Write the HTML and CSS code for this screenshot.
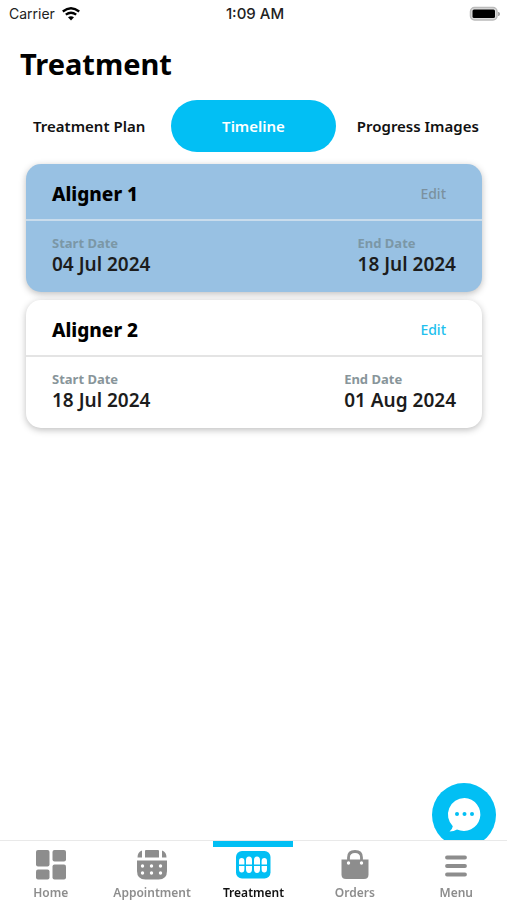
FILE: index.html
```html
<!DOCTYPE html>
<html lang="en">
<head>
<meta charset="utf-8">
<meta name="viewport" content="width=device-width, initial-scale=1">
<title>Treatment</title>
<link rel="stylesheet" href="styles.css">
</head>
<body>
<div class="app">
  <header class="status">
    <div class="carrier">
      <span>Carrier</span>
      <svg class="wifi" viewBox="0 0 18 14" aria-hidden="true">
        <path d="M.8 4.500Q9-2 17.200 4.500M3.800 7.700Q9 3.700 14.200 7.700" fill="none" stroke="#000" stroke-width="2.300"/>
        <path d="M6 10.300Q9 8 12 10.300L9 13.400Z"/>
      </svg>
    </div>
    <span class="time">1:09 AM</span>
    <svg class="battery" viewBox="0 0 32 16" aria-hidden="true">
      <rect x="1.500" y="1.500" width="26.500" height="12.500" rx="4" fill="#ddd" stroke="#bbb" stroke-width="1.500"/>
      <rect x="3.500" y="3.500" width="22.500" height="8.500" rx="1.500"/>
      <path d="M29.500 6Q32 8 29.500 10Z" fill="#aaa" stroke="#aaa"/>
    </svg>
  </header>
  <h1 class="title">Treatment</h1>
  <div class="tabs" role="tablist">
    <button class="tab" role="tab" type="button">Treatment Plan</button>
    <button class="tab tab-active" role="tab" type="button" aria-selected="true">Timeline</button>
    <button class="tab" role="tab" type="button">Progress Images</button>
  </div>
  <main class="content">
    <article class="card card-current">
      <div class="card-head">
        <h2>Aligner 1</h2>
        <button class="edit" type="button" disabled>Edit</button>
      </div>
      <dl class="dates">
        <div><dt>Start Date</dt><dd>04 Jul 2024</dd></div>
        <div><dt>End Date</dt><dd>18 Jul 2024</dd></div>
      </dl>
    </article>
    <article class="card">
      <div class="card-head">
        <h2>Aligner 2</h2>
        <button class="edit" type="button">Edit</button>
      </div>
      <dl class="dates">
        <div><dt>Start Date</dt><dd>18 Jul 2024</dd></div>
        <div><dt>End Date</dt><dd>01 Aug 2024</dd></div>
      </dl>
    </article>
  </main>
  <div class="dock">
    <button class="chat" type="button" aria-label="Chat">
      <svg viewBox="0 0 64 64" aria-hidden="true">
        <path d="M32.500 15A16.500 16.500 0 1 1 25 46.500Q22 48.500 17.500 48.500Q20.500 46 20.800 43.200A16.500 16.500 0 0 1 32.500 15Z" fill="#fff"/>
        <g fill="#02bff4"><circle cx="25" cy="31" r="2"/><circle cx="32.500" cy="31" r="2"/><circle cx="40" cy="31" r="2"/></g>
      </svg>
    </button>
    <nav class="nav">
      <a class="item" href="#home">
        <svg viewBox="0 0 36 32" aria-hidden="true">
          <rect x="3" y="1" width="13.500" height="16.500" rx="2"/><rect x="19.500" y="1" width="13.500" height="11.500" rx="2"/>
          <rect x="3" y="20.500" width="13.500" height="10" rx="2"/><rect x="19.500" y="15.500" width="13.500" height="15" rx="2"/>
        </svg>
        <span>Home</span>
      </a>
      <a class="item" href="#appointment">
        <svg viewBox="0 0 36 32" aria-hidden="true">
          <path d="M8 1.500V8.500H3.500Q3.500 3 8 1.500ZM12 1H24Q25 1 25 2V8.500H11V2Q11 1 12 1ZM28 1.500Q32.500 3 32.500 8.500H28Z"/>
          <path d="M3 11.500H33V22Q33 30.500 24.500 30.500H11.500Q3 30.500 3 22Z"/>
          <g fill="#fff"><circle cx="8.500" cy="17" r="1.700"/><circle cx="17.500" cy="17" r="1.700"/><circle cx="26.500" cy="17" r="1.700"/><circle cx="8.500" cy="24" r="1.700"/><circle cx="17.500" cy="24" r="1.700"/><circle cx="26.500" cy="24" r="1.700"/></g>
        </svg>
        <span>Appointment</span>
      </a>
      <a class="item item-active" href="#treatment" aria-current="page">
        <svg viewBox="0 0 36 32" aria-hidden="true">
          <rect x="1" y="2" width="34.500" height="27.500" rx="6"/>
          <g fill="#fff">
            <path d="M4 15.500V12Q4 9 6.700 9T9.400 12V15.500ZM11 15.500V11Q11 7.500 14 7.500T17 11V15.500ZM19 15.500V11Q19 7.500 22 7.500T25 11V15.500ZM26.600 15.500V12Q26.600 9 29.300 9T32 12V15.500Z"/>
            <path d="M4 17H9.400V20Q9.400 23.500 6.700 23.500T4 20ZM11 17H17V20Q17 24 14 24T11 20ZM19 17H25V20Q25 24 22 24T19 20ZM26.600 17H32V20Q32 23.500 29.300 23.500T26.600 20Z"/>
          </g>
        </svg>
        <span>Treatment</span>
      </a>
      <a class="item" href="#orders">
        <svg viewBox="0 0 36 32" aria-hidden="true">
          <path d="M4.500 10.500H31.500V25.500Q31.500 30 27 30H9Q4.500 30 4.500 25.500Z"/>
          <path d="M11.500 13V8.500Q11.500 2.500 18 2.500T24.500 8.500V13" fill="none" stroke="#8d8d8d" stroke-width="2.800"/>
          <g fill="#fff"><circle cx="11.500" cy="14" r="1.700"/><circle cx="24.500" cy="14" r="1.700"/></g>
        </svg>
        <span>Orders</span>
      </a>
      <a class="item" href="#menu">
        <svg viewBox="0 0 36 32" aria-hidden="true">
          <path d="M9 8.500H27M9 17H27M9 25.500H27" stroke="#8d8d8d" stroke-width="3.800" stroke-linecap="round"/>
        </svg>
        <span>Menu</span>
      </a>
    </nav>
  </div>
</div>
</body>
</html>
```
FILE: styles.css
```css
* { box-sizing: border-box; }
body {
  margin: 0;
  background: #fff;
  color: #000;
  font-family: "Noto Sans", sans-serif;
}
button { border: 0; background: none; padding: 0; font-family: inherit; }
h1, h2, dl, dd { margin: 0; }

.app { min-height: 100vh; display: flex; flex-direction: column; }

.status {
  display: grid;
  grid-template-columns: 1fr auto 1fr;
  align-items: center;
  height: 28px;
  padding: 0 6px 0 9px;
  font: 14px/28px "Inter", sans-serif;
  color: #222;
}
.carrier { display: flex; align-items: center; gap: 7px; }
.wifi { width: 18px; height: 14px; }
.time { font-size: 15px; font-weight: 500; }
.battery { width: 32px; height: 16px; justify-self: end; }

.title { padding: 16px 20px; font-size: 29px; line-height: 40px; font-weight: 700; }

.tabs { display: grid; grid-template-columns: repeat(3, 1fr); padding: 0 7px; }
.tab { height: 52px; border-radius: 26px; font-size: 15px; font-weight: 600; color: #111; white-space: nowrap; }
.tab-active { background: #02bff4; color: #fff; }

.content { flex: 1; display: flex; flex-direction: column; gap: 8px; padding: 12px 25px 12px 26px; }
.card { border-radius: 15px; background: #fff; box-shadow: 0 2px 7px rgba(0, 0, 0, .26); }
.card-current { background: #98c1e3; }
.card-head {
  display: flex;
  align-items: center;
  justify-content: space-between;
  height: 57px;
  padding: 4px 36px 0 26px;
  border-bottom: 2px solid #e4e4e4;
}
.card-current .card-head { border-color: #c9dcec; }
.card h2 { font-size: 19px; line-height: 28px; font-weight: 800; }
.edit { font-size: 14px; font-weight: 500; color: #22bfee; }
.edit:disabled { color: #7b919f; }
.dates { display: flex; justify-content: space-between; padding: 12px 26px 17px; }
dt { font-size: 13px; line-height: 20px; font-weight: 700; color: #88959a; }
.card-current dt { color: #7b97a6; }
dd { font-size: 19px; line-height: 22px; font-weight: 600; color: #1c1c1c; }

.dock { position: sticky; bottom: 0; }
.chat {
  position: absolute;
  right: 11px;
  bottom: 53px;
  width: 64px;
  height: 64px;
  border-radius: 50%;
  background: #02bff4;
}
.chat svg { display: block; width: 64px; height: 64px; }
.nav {
  position: relative;
  display: grid;
  grid-template-columns: repeat(5, 1fr);
  height: 60px;
  background: #fff;
  border-top: 1px solid #e9e9e9;
}
.item {
  position: relative;
  display: flex;
  flex-direction: column;
  align-items: center;
  padding-top: 8px;
  font-size: 12px;
  line-height: 16px;
  font-weight: 600;
  gap: 4px;
  color: #8d8d8d;
  text-decoration: none;
}
.item svg { width: 36px; height: 32px; fill: #8d8d8d; }
.item-active { color: #111; }
.item-active svg { fill: #02bff4; }
.item-active::before {
  content: "";
  position: absolute;
  top: 0;
  width: 80px;
  height: 6px;
  background: #02bff4;
}
```
